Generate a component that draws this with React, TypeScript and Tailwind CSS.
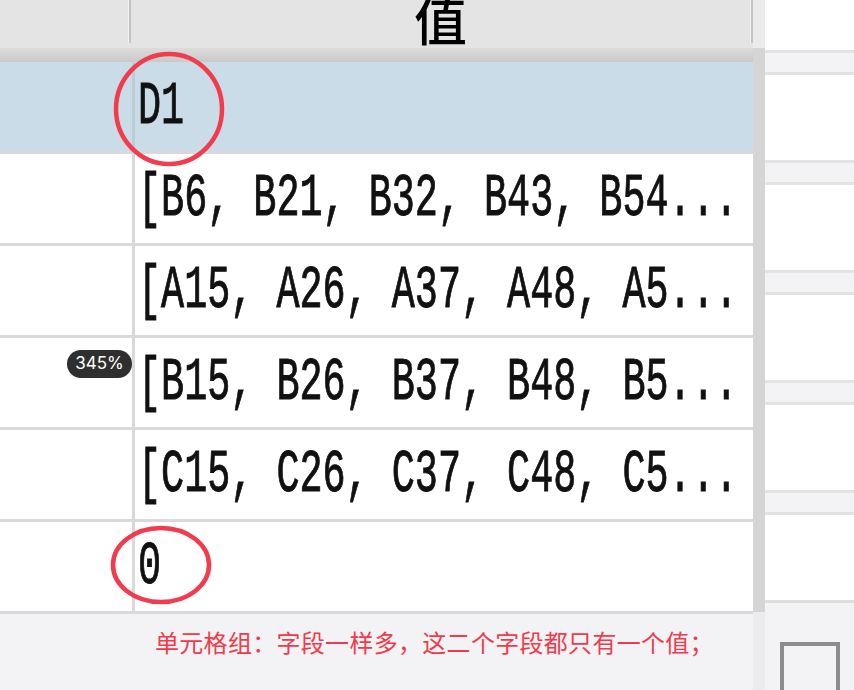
import React from 'react';

const rows = [
  { value: 'D1', selected: true },
  { value: '[B6, B21, B32, B43, B54...' },
  { value: '[A15, A26, A37, A48, A5...' },
  { value: '[B15, B26, B37, B48, B5...' },
  { value: '[C15, C26, C37, C48, C5...' },
  { value: '0' },
];

const App: React.FC = () => {
  return (
    <div className="relative w-[854px] h-[690px] overflow-hidden flex bg-white">
      {/* Table */}
      <div className="w-[753px] flex flex-col">
        {/* Header */}
        <div className="h-[48px] shrink-0 bg-[#e4e4e4] flex overflow-hidden">
          <div className="w-[128px]" />
          <div className="w-[3px] h-[43px] bg-[#c4c4c4] border-l border-[#f2f2f2]" />
          <div className="flex-1 flex justify-center">
            <span className="block -mt-[8px] text-[53px] leading-none font-medium text-black [font-family:'Noto_Sans_CJK_SC',sans-serif]">值</span>
          </div>
          <div className="w-[3px] h-[43px] bg-[#c4c4c4] border-l border-[#f2f2f2]" />
        </div>
        <div className="h-[14px] shrink-0 bg-gradient-to-b from-[#dcdcdc] to-[#c9c9c9]" />

        {/* Rows */}
        {rows.map((row, i) => (
          <div
            key={i}
            className={`h-[92px] shrink-0 flex border-b-[3px] border-[#d9d9d9] ${row.selected ? 'bg-[#c9dce7]' : 'bg-white'}`}
          >
            <div className={`w-[135px] border-r-[3px] ${row.selected ? 'border-[#bccdd6]' : 'border-[#d9d9d9]'}`} />
            <div className="flex-1 flex items-center pl-[3px] overflow-hidden">
              <span className="block whitespace-nowrap origin-left scale-x-[0.62] text-[62px] leading-none font-normal text-[#111111] [-webkit-text-stroke:1px_#111111] [font-family:'Liberation_Mono',monospace]">
                {row.value}
              </span>
            </div>
          </div>
        ))}

        {/* Footer */}
        <div className="flex-1 bg-[#f3f3f5] pl-[155px] pt-[16px]">
          <p className="text-[24px] tracking-[0.3px] leading-none text-[#f13a4b] [font-family:'Noto_Sans_CJK_SC',sans-serif]">
            单元格组：字段一样多，这二个字段都只有一个值；
          </p>
        </div>
      </div>

      {/* Splitter */}
      <div className="w-[12px] flex flex-col">
        <div className="h-[48px] shrink-0 bg-[#ebebeb]" />
        <div className="h-[564px] shrink-0 bg-[#d5d5d5]" />
        <div className="flex-1 bg-[#ececee]" />
      </div>

      {/* Right panel */}
      <div className="flex-1 flex flex-col overflow-hidden">
        <div className="h-[50px] shrink-0 bg-white" />
        {[0, 1, 2, 3, 4].map((i) => (
          <React.Fragment key={i}>
            <div className="h-[25px] shrink-0 bg-[#f3f3f5] border-y-[3px] border-[#e3e3e3]" />
            <div className="h-[85px] shrink-0 bg-white" />
          </React.Fragment>
        ))}
        <div className="h-[120px] shrink-0 bg-[#f3f3f5] border-t-[3px] border-[#dedede] pl-[15px] pt-[39px]">
          <div className="w-[60px] h-[70px] border-4 border-[#8c8c8c]" />
        </div>
      </div>

      {/* Annotations */}
      <svg className="absolute inset-0 pointer-events-none" width="854" height="690">
        <ellipse cx="169" cy="109" rx="53" ry="55" fill="none" stroke="#f23b4c" strokeWidth="4.5" />
        <ellipse cx="161" cy="565" rx="48" ry="37" fill="none" stroke="#f23b4c" strokeWidth="4.5" />
      </svg>

      <div className="absolute left-[67px] top-[350px] w-[65px] h-[28px] rounded-full bg-[#2f2f2f] flex items-center justify-center text-white text-[17px] [font-family:Inter,sans-serif]">
        345%
      </div>
    </div>
  );
};

export default App;
